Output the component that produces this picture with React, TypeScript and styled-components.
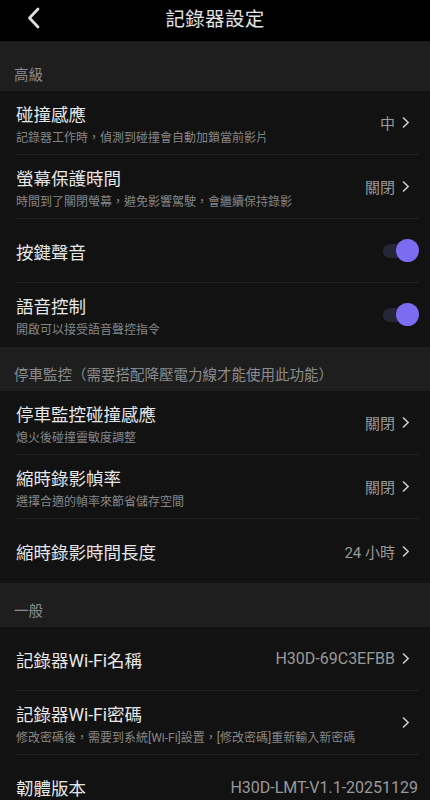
import React from "react";
import styled, { createGlobalStyle } from "styled-components";

const Global = createGlobalStyle`
  html, body { margin: 0; padding: 0; background: #121212; }
  body { font-family: Roboto, "Noto Sans CJK TC", "Noto Sans", sans-serif; -webkit-font-smoothing: antialiased; }
  * { box-sizing: border-box; }
`;

const Page = styled.div`
  width: 430px;
  background: #121212;
  display: flex;
  flex-direction: column;
`;

const TopBar = styled.header`
  height: 41px;
  background: #000;
  display: grid;
  grid-template-columns: 60px 1fr 60px;
  align-items: center;
`;

const BackButton = styled.button`
  background: none;
  border: none;
  padding: 0 0 0 26px;
  height: 41px;
  display: flex;
  align-items: center;
  margin-top: -6px;
  cursor: pointer;
`;

const Title = styled.h1`
  margin: -7px 0 0 0;
  text-align: center;
  font-size: 19.5px;
  font-weight: 400;
  color: #e2e2e2;
  letter-spacing: 0.3px;
`;

const SectionHeader = styled.div<{ $h: number }>`
  height: ${(p) => p.$h}px;
  background: #1e1e1e;
  display: flex;
  align-items: flex-end;
  padding: 0 14px 5px 14px;
  font-size: 14.5px;
  line-height: 20px;
  color: #8b8b8b;
`;

const Group = styled.div`
  background: #121212;
  display: flex;
  flex-direction: column;
`;

const Row = styled.div<{ $last?: boolean }>`
  height: 64px;
  margin: 0 11px 0 16px;
  display: flex;
  align-items: center;
  justify-content: space-between;
  border-bottom: ${(p) => (p.$last ? "none" : "1px solid #232323")};
`;

const TextCol = styled.div`
  display: flex;
  flex-direction: column;
  gap: 4px;
  padding-top: 4px;
  min-width: 0;
`;

const RowTitle = styled.div`
  font-size: 17.5px;
  line-height: 22px;
  color: #e6e6e6;
  white-space: nowrap;
`;

const RowSub = styled.div`
  font-size: 12px;
  line-height: 16px;
  color: #868686;
  white-space: nowrap;
`;

const Right = styled.div<{ $pad?: number }>`
  display: flex;
  align-items: center;
  gap: 7px;
  padding-right: ${(p) => p.$pad ?? 9}px;
  flex-shrink: 0;
`;

const Value = styled.span<{ $latin?: boolean }>`
  font-size: ${(p) => (p.$latin ? 16 : 15)}px;
  color: #999;
  white-space: nowrap;
`;

const Toggle = styled.div`
  position: relative;
  width: 36px;
  height: 24px;
`;

const Track = styled.div`
  position: absolute;
  left: 0;
  top: 5px;
  width: 30px;
  height: 14px;
  border-radius: 7px;
  background: #272637;
`;

const Knob = styled.div`
  position: absolute;
  right: 0;
  top: 0;
  width: 23px;
  height: 23px;
  border-radius: 50%;
  background: #7c6cf2;
`;

const Chevron = () => (
  <svg width="8" height="11" viewBox="0 0 8 11" fill="none">
    <path d="M1.5 1 L6.2 5.5 L1.5 10" stroke="#cfcfcf" strokeWidth="1.6" strokeLinecap="round" strokeLinejoin="round" />
  </svg>
);

const BackIcon = () => (
  <svg width="16" height="22" viewBox="0 0 16 22" fill="none">
    <path d="M12 2 L3.5 11 L12 20" stroke="#dcdcdc" strokeWidth="2.8" strokeLinecap="round" strokeLinejoin="round" />
  </svg>
);

type Item = {
  title: string;
  sub?: string;
  value?: string;
  latin?: boolean;
  chevron?: boolean;
  toggle?: boolean;
  pad?: number;
};

const SettingRow = ({ item, last }: { item: Item; last?: boolean }) => (
  <Row $last={last}>
    <TextCol>
      <RowTitle>{item.title}</RowTitle>
      {item.sub && <RowSub>{item.sub}</RowSub>}
    </TextCol>
    {item.toggle ? (
      <Toggle>
        <Track />
        <Knob />
      </Toggle>
    ) : (
      <Right $pad={item.pad}>
        {item.value && <Value $latin={item.latin}>{item.value}</Value>}
        {item.chevron && <Chevron />}
      </Right>
    )}
  </Row>
);

const sections: { header: string; h: number; items: Item[] }[] = [
  {
    header: "高級",
    h: 50,
    items: [
      { title: "碰撞感應", sub: "記錄器工作時，偵測到碰撞會自動加鎖當前影片", value: "中", chevron: true },
      { title: "螢幕保護時間", sub: "時間到了關閉螢幕，避免影響駕駛，會繼續保持錄影", value: "關閉", chevron: true },
      { title: "按鍵聲音", toggle: true },
      { title: "語音控制", sub: "開啟可以接受語音聲控指令", toggle: true },
    ],
  },
  {
    header: "停車監控（需要搭配降壓電力線才能使用此功能）",
    h: 44,
    items: [
      { title: "停車監控碰撞感應", sub: "熄火後碰撞靈敏度調整", value: "關閉", chevron: true },
      { title: "縮時錄影幀率", sub: "選擇合適的幀率來節省儲存空間", value: "關閉", chevron: true },
      { title: "縮時錄影時間長度", value: "24 小時", chevron: true },
    ],
  },
  {
    header: "一般",
    h: 44,
    items: [
      { title: "記錄器Wi-Fi名稱", value: "H30D-69C3EFBB", latin: true, chevron: true },
      { title: "記錄器Wi-Fi密碼", sub: "修改密碼後，需要到系統[Wi-Fi]設置，[修改密碼]重新輸入新密碼", chevron: true },
      { title: "韌體版本", value: "H30D-LMT-V1.1-20251129", latin: true, pad: 1 },
    ],
  },
];

export default function App() {
  return (
    <Page>
      <Global />
      <TopBar>
        <BackButton aria-label="back">
          <BackIcon />
        </BackButton>
        <Title>記錄器設定</Title>
        <div />
      </TopBar>
      {sections.map((s) => (
        <React.Fragment key={s.header}>
          <SectionHeader $h={s.h}>{s.header}</SectionHeader>
          <Group>
            {s.items.map((it, i) => (
              <SettingRow key={it.title} item={it} last={i === s.items.length - 1} />
            ))}
          </Group>
        </React.Fragment>
      ))}
    </Page>
  );
}
